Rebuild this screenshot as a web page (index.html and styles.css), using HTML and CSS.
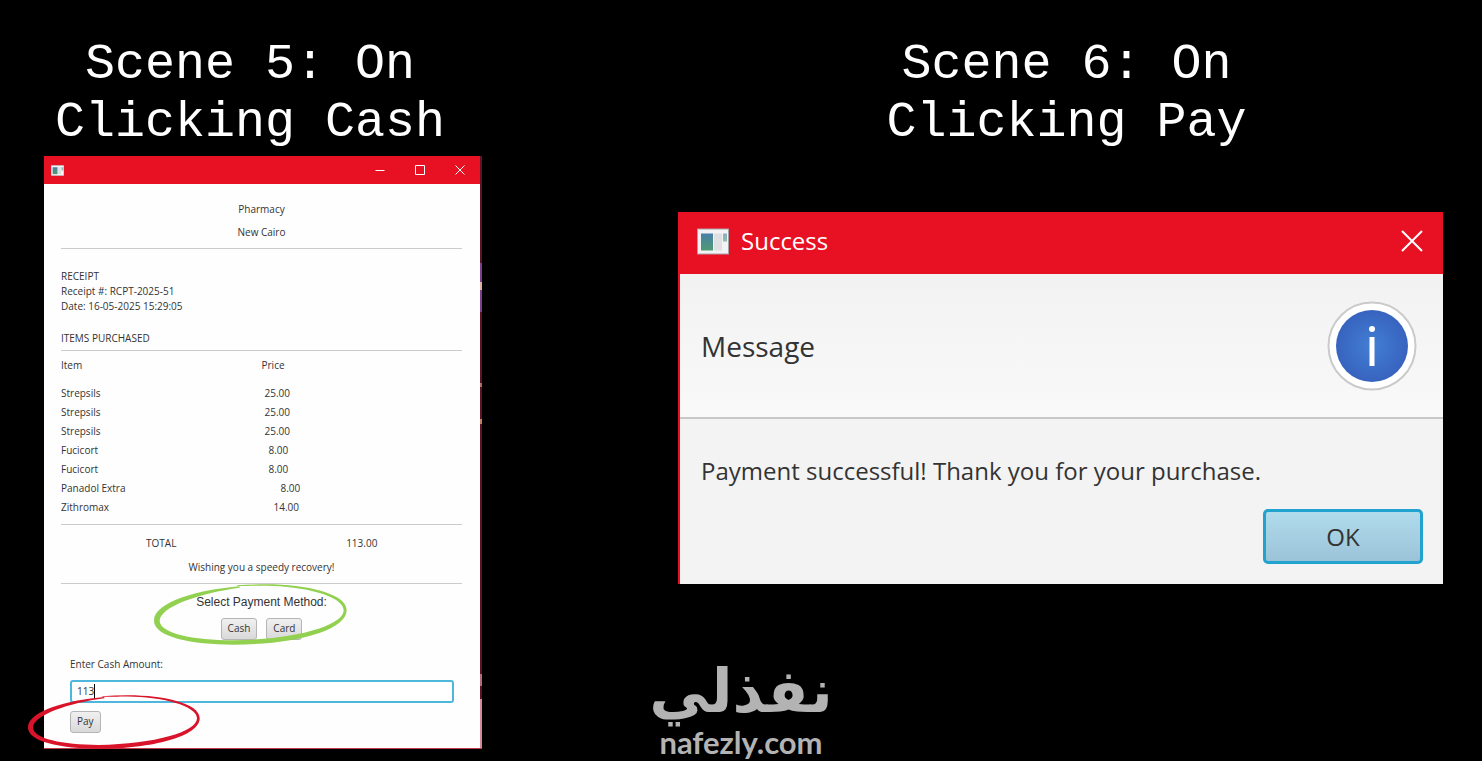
FILE: index.html
```html
<!DOCTYPE html>
<html lang="en">
<head>
    <meta charset="UTF-8">
    <meta name="viewport" content="width=device-width, initial-scale=1.0">
    <title>Pharmacy - Cash Payment</title>
    <link rel="stylesheet" href="styles.css">
</head>
<body>
    <!-- Shared shapes -->
    <svg class="defs" width="0" height="0" aria-hidden="true">
        <symbol id="app-icon" viewBox="0 0 32 26">
            <rect width="32" height="26" fill="#a9a3a8"/>
            <rect x="1" y="1" width="30" height="24" fill="#f3f3f5"/>
            <rect x="4" y="5" width="12" height="17" fill="url(#screen)"/>
            <rect x="17" y="5" width="8" height="17" fill="#e0e0e2"/>
            <rect x="26" y="5" width="4" height="8" fill="url(#screen)" opacity="0.6"/>
        </symbol>
        <linearGradient id="screen" x1="0" y1="0" x2="0" y2="1">
            <stop offset="0" stop-color="#4a7fa8"/>
            <stop offset="1" stop-color="#4f9a72"/>
        </linearGradient>
        <symbol id="brush-ring" viewBox="403 39 579 184" preserveAspectRatio="none">
            <path d="M660 46C540 56 403 92 403 150C403 200 520 222 640 222C820 222 981 180 981 118C981 68 860 40 740 40C710 40 680 41 650 43L655 45C690 45 720 44 740 44C850 45 971 74 972 118C972 164 830 206 640 209C520 209 420 188 420 150C420 108 540 66 660 50Z"/>
        </symbol>
    </svg>

    <main class="slide">
        <!-- Scene 5 -->
        <section class="scene scene-cash">
            <h1>Scene 5: On<br>Clicking Cash</h1>
            <div class="window">
                <div class="title-bar">
                    <svg class="app-icon"><use href="#app-icon"/></svg>
                    <div class="window-controls">
                        <button type="button" aria-label="Minimize"><svg viewBox="0 0 10 10"><path d="M0.5 5.5H9.5"/></svg></button>
                        <button type="button" aria-label="Maximize"><svg viewBox="0 0 10 10"><path d="M0.5 0.5H9.5V9.5H0.5Z"/></svg></button>
                        <button type="button" aria-label="Close"><svg viewBox="0 0 10 10"><path d="M0.5 0.5L9.5 9.5M9.5 0.5L0.5 9.5"/></svg></button>
                    </div>
                </div>
                <div class="receipt">
                    <header class="store">
                        <p>Pharmacy</p>
                        <p>New Cairo</p>
                    </header>
                    <div class="receipt-info">
                        <p>RECEIPT</p>
                        <p>Receipt #: RCPT-2025-51</p>
                        <p>Date: 16-05-2025 15:29:05</p>
                    </div>
                    <p class="items-title">ITEMS PURCHASED</p>
                    <table class="items">
                        <thead>
                            <tr><th>Item</th><th>Price</th></tr>
                        </thead>
                        <tbody>
                            <tr><td>Strepsils</td><td class="indent-1">25.00</td></tr>
                            <tr><td>Strepsils</td><td class="indent-1">25.00</td></tr>
                            <tr><td>Strepsils</td><td class="indent-1">25.00</td></tr>
                            <tr><td>Fucicort</td><td class="indent-2">8.00</td></tr>
                            <tr><td>Fucicort</td><td class="indent-2">8.00</td></tr>
                            <tr><td>Panadol Extra</td><td class="indent-4">8.00</td></tr>
                            <tr><td>Zithromax</td><td class="indent-3">14.00</td></tr>
                        </tbody>
                    </table>
                    <div class="total">
                        <span>TOTAL</span>
                        <span>113.00</span>
                    </div>
                    <p class="wish">Wishing you a speedy recovery!</p>
                    <div class="payment">
                        <p class="payment-title">Select Payment Method:</p>
                        <div class="payment-buttons">
                            <button type="button" class="button">Cash</button>
                            <button type="button" class="button">Card</button>
                        </div>
                        <svg class="ring ring-green" aria-hidden="true"><use href="#brush-ring"/></svg>
                    </div>
                    <form class="cash-form">
                        <label for="cash-amount">Enter Cash Amount:</label>
                        <input type="text" id="cash-amount" value="113">
                        <span class="caret"></span>
                        <button type="button" class="button">Pay</button>
                        <svg class="ring ring-red" aria-hidden="true"><use href="#brush-ring"/></svg>
                    </form>
                </div>
            </div>
        </section>

        <!-- Scene 6 -->
        <section class="scene scene-pay">
            <h1>Scene 6: On<br>Clicking Pay</h1>
            <div class="dialog">
                <div class="dialog-bar">
                    <svg class="app-icon"><use href="#app-icon"/></svg>
                    <h2>Success</h2>
                    <button type="button" class="dialog-close" aria-label="Close"><svg viewBox="0 0 22 22"><path d="M1 1L21 21M21 1L1 21"/></svg></button>
                </div>
                <div class="dialog-header">
                    <p>Message</p>
                    <svg class="info-icon" viewBox="0 0 90 90" aria-hidden="true">
                        <defs>
                            <radialGradient id="info-blue">
                                <stop offset="0" stop-color="#437fd4"/>
                                <stop offset="1" stop-color="#3763be"/>
                            </radialGradient>
                        </defs>
                        <circle cx="45" cy="45" r="43.5" fill="#fff" stroke="#cacaca" stroke-width="2"/>
                        <circle cx="45" cy="45" r="36" fill="url(#info-blue)"/>
                        <circle cx="45" cy="28" r="3" fill="#fff"/>
                        <rect x="42.5" y="36" width="5" height="29" fill="#fff"/>
                    </svg>
                </div>
                <div class="dialog-content">
                    <p>Payment successful! Thank you for your purchase.</p>
                    <button type="button" class="ok-button">OK</button>
                </div>
            </div>
        </section>
    </main>

    <div class="watermark">
        <span class="watermark-ar" lang="ar" dir="rtl">نفذلي</span>
        <span class="watermark-en">nafezly.com</span>
    </div>
</body>
</html>
```
FILE: styles.css
```css
:root {
    --bg-primary: #000;
    --red: #e81123;
    --text-dark: #333;
    --line: #cbcbcb;
    --green: #92d050;
    --font-heading: "Liberation Mono", monospace;
    --font-ui: "Open Sans", sans-serif;
}

* {
    box-sizing: border-box;
}

body {
    margin: 0;
    min-height: 100vh;
    position: relative;
    background-color: var(--bg-primary);
    color: var(--text-dark);
    font-family: var(--font-ui);
}

p,
h1,
h2 {
    margin: 0;
    font-weight: 400;
}

button {
    font-family: inherit;
    color: inherit;
    cursor: pointer;
}

.defs {
    position: absolute;
}

.slide {
    display: grid;
    grid-template-columns: 438fr 765fr;
    align-items: start;
    gap: 196px;
    padding: 36px 39px 12px 44px;
}

h1 {
    font-family: var(--font-heading);
    font-size: 50px;
    line-height: 58px;
    color: #fff;
    text-align: center;
    white-space: nowrap;
}

.scene-cash h1 {
    padding-right: 26px;
    margin-bottom: 4px;
}

.scene-pay h1 {
    padding-left: 12px;
    margin-bottom: 60px;
}

/* Receipt window */
.window {
    position: relative;
    padding-right: 2px;
    background-color: #fefefe;
    border-bottom: 1px solid #c03a4c;
    font-size: 10px;
    line-height: 15px;
}

/* Sliver of the desktop behind the window */
.window::after {
    content: "";
    position: absolute;
    top: 0;
    right: 0;
    bottom: 0;
    width: 2px;
    background: linear-gradient(
        #5a1426 107px,
        #7a3f8f 107px 126px,
        #e0b0a0 126px 134px,
        #7a3f8f 134px 156px,
        #5a1426 156px 227px,
        #b07060 227px 231px,
        #5a1426 231px 263px,
        #c08060 263px 268px,
        #5a1426 268px 518px,
        #b06a78 518px 530px,
        #5a1426 530px 543px,
        #d08a98 543px
    );
}

.title-bar {
    display: flex;
    align-items: center;
    justify-content: space-between;
    height: 28px;
    padding: 0 15px 0 7px;
    background-color: var(--red);
}

.title-bar .app-icon {
    width: 13px;
    height: 11px;
}

.window-controls {
    display: flex;
    gap: 30px;
}

.window-controls button,
.dialog-close {
    display: flex;
    padding: 0;
    border: none;
    background: none;
}

.window-controls svg {
    width: 10px;
    height: 10px;
}

.window-controls path,
.dialog-close path {
    fill: none;
    stroke: #fff;
}

.receipt {
    padding: 18px 18px 15px 17px;
}

.store {
    display: flex;
    flex-direction: column;
    gap: 8px;
    padding-bottom: 8px;
    border-bottom: 1px solid var(--line);
    text-align: center;
}

.receipt-info {
    padding: 20px 0 17px;
}

.items-title {
    padding-bottom: 4px;
    border-bottom: 1px solid var(--line);
}

.items {
    width: 100%;
    margin-top: 5px;
    border-collapse: collapse;
    table-layout: fixed;
    border-bottom: 1px solid var(--line);
}

.items th,
.items td {
    height: 19px;
    padding: 0;
    font-weight: 400;
    text-align: left;
}

.items th {
    height: 28px;
    padding-bottom: 9px;
}

.items tr:last-child td {
    height: 26px;
    padding-bottom: 6px;
}

.items .indent-1 {
    padding-left: 3px;
}

.items .indent-2 {
    padding-left: 7px;
}

.items .indent-3 {
    padding-left: 12px;
}

.items .indent-4 {
    padding-left: 19px;
}

.total {
    display: grid;
    grid-template-columns: 1fr 1fr;
    padding: 11px 0 9px;
    text-align: center;
}

.wish {
    padding-bottom: 8px;
    border-bottom: 1px solid var(--line);
    text-align: center;
}

.payment {
    position: relative;
    display: flex;
    flex-direction: column;
    align-items: center;
    gap: 8px;
    padding-top: 11px;
}

.payment-title {
    font-family: "Liberation Sans", sans-serif;
    font-size: 12px;
}

.payment-buttons {
    display: flex;
    gap: 9px;
}

.button {
    height: 22px;
    padding: 0 6px;
    border: 1px solid #b5b5b5;
    border-radius: 3px;
    background: linear-gradient(#f0f0f0, #d9d9d9);
    font-size: 10px;
    line-height: 15px;
}

.cash-form {
    position: relative;
    display: flex;
    flex-direction: column;
    align-items: flex-start;
    gap: 8px;
    padding: 17px 8px 0 9px;
}

.cash-form input {
    width: 100%;
    height: 23px;
    padding: 0 5px;
    border: 2px solid #4db8dc;
    border-radius: 3px;
    outline: none;
    background-color: #fff;
    color: var(--text-dark);
    font-family: inherit;
    font-size: 10px;
}

.caret {
    position: absolute;
    left: 33px;
    top: 44px;
    width: 1px;
    height: 15px;
    background-color: #000;
}

.ring {
    position: absolute;
    pointer-events: none;
}

.ring-green {
    left: 93px;
    top: 0;
    width: 193px;
    height: 61px;
    fill: var(--green);
}

.ring-red {
    left: -33px;
    bottom: -16px;
    width: 172px;
    height: 54px;
    fill: #d9142a;
}

/* Success dialog */
.dialog {
    border-left: 2px solid var(--red);
    background-color: #f3f3f3;
    font-size: 24px;
    line-height: 36px;
}

.dialog-bar {
    display: flex;
    align-items: center;
    gap: 12px;
    height: 62px;
    padding: 0 20px 4px 17px;
    background-color: var(--red);
    color: #fff;
}

.dialog-bar .app-icon {
    width: 32px;
    height: 27px;
}

.dialog-bar h2 {
    font-size: 24px;
}

.dialog-close {
    margin-left: auto;
}

.dialog-close svg {
    width: 22px;
    height: 22px;
}

.dialog-close path {
    stroke-width: 2;
}

.dialog-header {
    display: flex;
    align-items: center;
    justify-content: space-between;
    height: 145px;
    padding: 0 26px 0 21px;
    border-bottom: 2px solid #c8c8c8;
    background: linear-gradient(#f2f2f2, #f9f9f9);
    font-size: 28px;
}

.info-icon {
    width: 90px;
    height: 90px;
}

.dialog-content {
    display: flex;
    flex-direction: column;
    gap: 20px;
    padding: 34px 20px 20px 21px;
}

.ok-button {
    align-self: flex-end;
    width: 160px;
    height: 55px;
    border: 3px solid #22a3cf;
    border-radius: 5px;
    background: linear-gradient(#b0dcec, #9bc3d8);
    font-size: 24px;
}

/* Watermark */
.watermark {
    position: absolute;
    left: 50%;
    bottom: 0;
    transform: translateX(-50%);
    display: flex;
    flex-direction: column;
    align-items: center;
    color: #b3b3b3;
}

.watermark-ar {
    font-family: "DejaVu Sans", sans-serif;
    font-size: 60px;
    font-weight: 700;
    line-height: 64px;
}

.watermark-en {
    font-family: Lato, sans-serif;
    font-size: 31px;
    font-weight: 700;
    line-height: 38px;
}
```
